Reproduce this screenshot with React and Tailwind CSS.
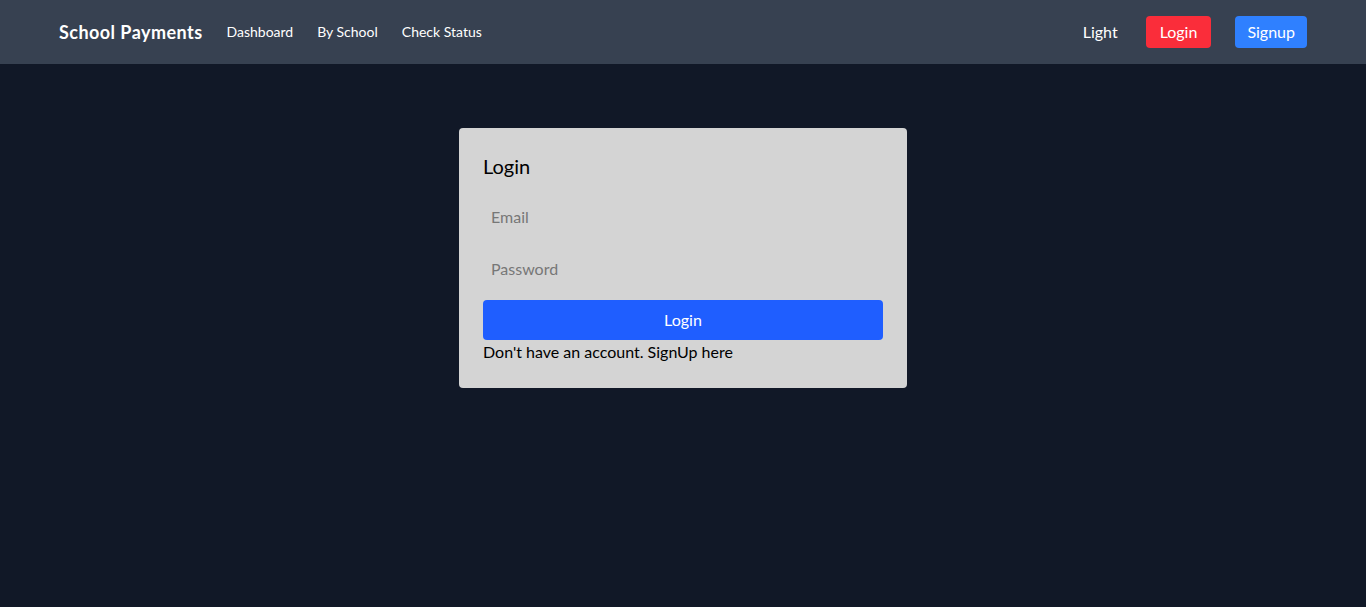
import { useState } from "react";

const Navbar = () => {
  return (
    <nav className="h-16 bg-[#374151] flex items-center justify-between px-[59px]">
      <div className="flex items-center gap-6">
        <span className="text-white text-lg font-bold tracking-[0.45px]">School Payments</span>
        <a className="text-white text-sm cursor-pointer">Dashboard</a>
        <a className="text-white text-sm cursor-pointer">By School</a>
        <a className="text-white text-sm cursor-pointer">Check Status</a>
      </div>
      <div className="flex items-center">
        <button className="text-white text-base px-3 mr-4">Light</button>
        <button className="bg-[#fa2d3a] text-white text-base h-8 px-[14px] rounded mr-6">Login</button>
        <button className="bg-[#2f80ff] text-white text-base h-8 px-3 rounded">Signup</button>
      </div>
    </nav>
  );
};

const App = () => {
  const [email, setEmail] = useState("");
  const [password, setPassword] = useState("");

  return (
    <div
      className="min-h-screen bg-[#111827]"
      style={{ fontFamily: '"Segoe UI", Lato, sans-serif' }}
    >
      <Navbar />
      <div className="flex justify-center pt-16">
        <div className="w-[448px] bg-[#d4d4d4] rounded p-6">
          <h2 className="text-xl text-black mb-4">Login</h2>
          <input
            type="email"
            placeholder="Email"
            value={email}
            onChange={(e) => setEmail(e.target.value)}
            className="block w-full h-10 px-2 mb-3 bg-transparent text-black placeholder-[#777] outline-none"
          />
          <input
            type="password"
            placeholder="Password"
            value={password}
            onChange={(e) => setPassword(e.target.value)}
            className="block w-full h-10 px-2 mb-3 bg-transparent text-black placeholder-[#777] outline-none"
          />
          <button className="w-full h-10 bg-[#1f5eff] text-white rounded">Login</button>
          <p className="text-black">Don't have an account. SignUp here</p>
        </div>
      </div>
    </div>
  );
};

export default App;
